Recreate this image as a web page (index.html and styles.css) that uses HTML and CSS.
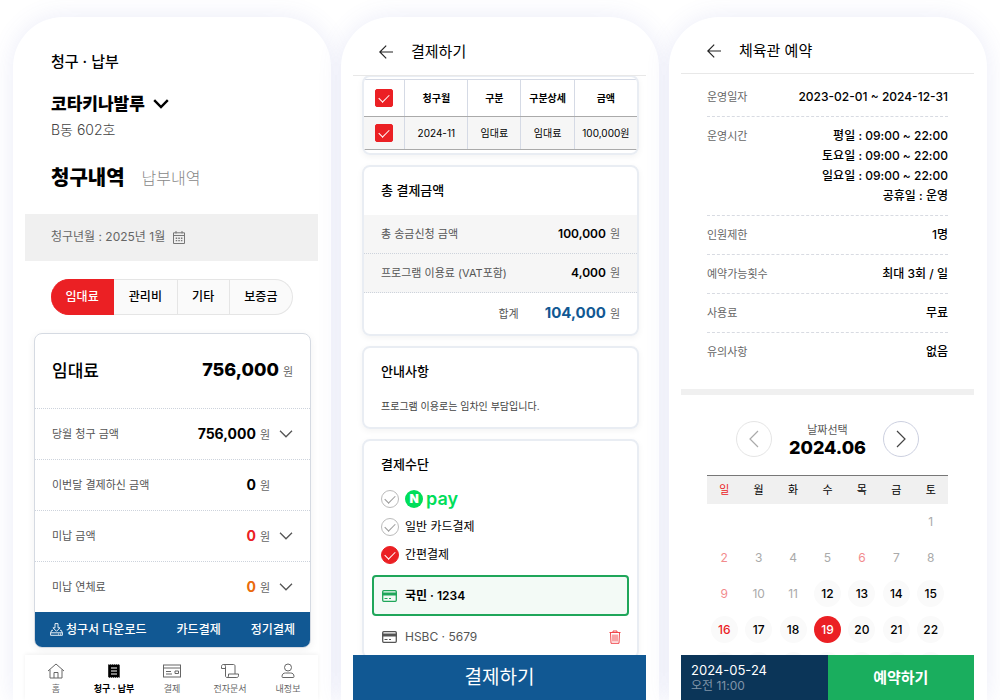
FILE: index.html
```html
<!DOCTYPE html>
<html lang="ko">
  <head>
    <meta charset="UTF-8" />
    <meta name="viewport" content="width=device-width, initial-scale=1.0" />
    <title>청구 · 납부</title>
    <link rel="stylesheet" href="styles.css" />
  </head>
  <body>
    <main class="phones">
      <!-- Billing -->
      <section class="phone">
        <div class="screen">
          <div class="bill-top">
            <h1 class="bill-title">청구 · 납부</h1>
            <label class="place">
              <select class="place-select" aria-label="건물 선택">
                <option>코타키나발루</option>
              </select>
              <svg class="place-arrow" width="16" height="10" viewBox="0 0 16 10" fill="none" stroke="#000" stroke-width="2.4"><path d="M1.2 1.2 8 8l6.8-6.8" /></svg>
            </label>
            <p class="room">B동 602호</p>
            <div class="bill-views">
              <button type="button" class="view active">청구내역</button>
              <button type="button" class="view">납부내역</button>
            </div>
          </div>

          <button type="button" class="month-bar">
            청구년월 : 2025년 1월
            <svg width="12" height="13" viewBox="0 0 12 13" fill="none" stroke="#777"><path d="M.5 1.800h11v10.700H.5zM.5 4.500h11M3 0v2.500M9 0v2.500" /><path d="M2.700 7.200h6.800M2.700 9.600h6.800" stroke-width="1.400" stroke-dasharray="1.500 1.100" /></svg>
          </button>

          <div class="tabs">
            <button type="button" class="tab active">임대료</button>
            <button type="button" class="tab">관리비</button>
            <button type="button" class="tab">기타</button>
            <button type="button" class="tab">보증금</button>
          </div>

          <article class="bill-card">
            <div class="bill-head">
              <h2>임대료</h2>
              <p><strong>756,000</strong><span class="won">원</span></p>
            </div>
            <div class="bill-row">
              <span>당월 청구 금액</span>
              <p><strong>756,000</strong><span class="won">원</span></p>
              <button type="button" class="toggle" aria-label="펼치기"><svg width="14" height="8" viewBox="0 0 14 8" fill="none" stroke="#555" stroke-width="1.3"><path d="m1 .8 6 6 6-6" /></svg></button>
            </div>
            <div class="bill-row">
              <span>이번달 결제하신 금액</span>
              <p><strong>0</strong><span class="won">원</span></p>
              <span class="toggle"></span>
            </div>
            <div class="bill-row">
              <span>미납 금액</span>
              <p><strong class="red">0</strong><span class="won">원</span></p>
              <button type="button" class="toggle" aria-label="펼치기"><svg width="14" height="8" viewBox="0 0 14 8" fill="none" stroke="#555" stroke-width="1.3"><path d="m1 .8 6 6 6-6" /></svg></button>
            </div>
            <div class="bill-row">
              <span>미납 연체료</span>
              <p><strong class="orange">0</strong><span class="won">원</span></p>
              <button type="button" class="toggle" aria-label="펼치기"><svg width="14" height="8" viewBox="0 0 14 8" fill="none" stroke="#555" stroke-width="1.3"><path d="m1 .8 6 6 6-6" /></svg></button>
            </div>
            <div class="bill-actions">
              <button type="button">
                <svg width="13" height="13" viewBox="0 0 13 13" fill="none" stroke="#fff" stroke-width=".9"><path d="M5 .6h3v4.200h2L6.500 8.300 3 4.800h2z" /><path d="M3 7.300H1.700L.6 9.800v2.500h11.800V9.800l-1.100-2.500H10" /><path d="M.6 9.800h11.800M8 11.100h1M10 11.100h1" /></svg>
                청구서 다운로드
              </button>
              <button type="button">카드결제</button>
              <button type="button">정기결제</button>
            </div>
          </article>
        </div>

        <nav class="bottom-nav">
          <a href="#home">
            <svg width="18" height="16" viewBox="0 0 18 16" fill="none" stroke="#666"><path d="M1 8 9 1l8 7" /><path d="M3 6.500V15h12V6.500" /><path d="M7 15V9.500h4V15" /></svg>
            홈
          </a>
          <a href="#bill" class="active">
            <svg width="18" height="16" viewBox="0 0 18 16"><path d="M3.200 1l1 .9 1-.9 1 .9 1-.9 1 .9 1-.9 1 .9 1-.9 1 .9 1-.9 1 .9.500-.4V15l-1-.9-1 .9-1-.9-1 .9-1-.9-1 .9-1-.9-1 .9-1-.9-1 .9-1-.9-.500.4z" /><path d="M6 5h6M6 8h6M6 11h6" stroke="#fff" stroke-width="1.200" /></svg>
            청구 · 납부
          </a>
          <a href="#pay">
            <svg width="18" height="16" viewBox="0 0 18 16" fill="none" stroke="#666"><rect x=".5" y="2" width="17" height="12" /><path d="M.5 5h17M3 8.500h5M3 11h6M12 8h3.500v2.500H12z" /></svg>
            결제
          </a>
          <a href="#docs">
            <svg width="18" height="16" viewBox="0 0 18 16" fill="none" stroke="#666"><path d="M2.500 1.500h10c1 0 1.500.7 1.500 1.500v8" /><path d="M4.500 5.500h-4V3.300c0-1 .7-1.800 2-1.800s2 .8 2 1.800V13c0 1 .8 1.500 1.500 1.500s1.500-.7 1.500-1.500v-2h10v1.800c0 1-.8 1.700-1.700 1.700H6" /></svg>
            전자문서
          </a>
          <a href="#me">
            <svg width="18" height="16" viewBox="0 0 18 16" fill="none" stroke="#666"><circle cx="9" cy="4.500" r="3.500" /><path d="M3 13.500c0-2.500 1.500-3.500 3.500-3.500h5c2 0 3.500 1 3.500 3.500 0 .8-.4 1-1 1H4c-.6 0-1-.2-1-1z" /></svg>
            내정보
          </a>
        </nav>
      </section>

      <!-- Payment -->
      <section class="phone">
        <header class="top-bar">
          <button type="button" aria-label="뒤로"><svg width="14" height="14" viewBox="0 0 14 14" fill="none" stroke="#222" stroke-width="1.200"><path d="M14 7H.8M7.200.6.800 7l6.400 6.400" /></svg></button>
          <h1>결제하기</h1>
        </header>
        <div class="screen">
          <article class="card list-card">
            <table class="pay-table">
              <thead>
                <tr>
                  <th class="col-check"><input type="checkbox" class="check" aria-label="전체 선택" checked /></th>
                  <th class="col-month">청구월</th>
                  <th>구분</th>
                  <th>구분상세</th>
                  <th class="col-price">금액</th>
                </tr>
              </thead>
              <tbody>
                <tr>
                  <td><input type="checkbox" class="check" aria-label="2024-11 임대료" checked /></td>
                  <td>2024-11</td>
                  <td>임대료</td>
                  <td>임대료</td>
                  <td>100,000원</td>
                </tr>
              </tbody>
            </table>
          </article>

          <article class="card">
            <h2>총 결제금액</h2>
            <div class="sum-row">
              <span>총 송금신청 금액</span>
              <p><strong>100,000</strong><span class="won">원</span></p>
            </div>
            <div class="sum-row">
              <span>프로그램 이용료 (VAT포함)</span>
              <p><strong>4,000</strong><span class="won">원</span></p>
            </div>
            <div class="sum-total">
              <span>합계</span>
              <p><strong>104,000</strong><span class="won">원</span></p>
            </div>
          </article>

          <article class="card">
            <h2>안내사항</h2>
            <p class="notice">프로그램 이용로는 임차인 부담입니다.</p>
          </article>

          <article class="card">
            <h2>결제수단</h2>
            <div class="methods">
              <label class="method">
                <input type="radio" name="method" class="check round" />
                <span class="npay"><b>N</b>pay</span>
              </label>
              <label class="method">
                <input type="radio" name="method" class="check round" />
                일반 카드결제
              </label>
              <label class="method">
                <input type="radio" name="method" class="check round" checked />
                간편결제
              </label>
            </div>
            <div class="my-card selected">
              <button type="button" class="card-name">
                <svg width="15" height="12" viewBox="0 0 15 12"><rect x=".7" y=".7" width="13.600" height="10.600" rx="1" fill="none" stroke="currentColor" stroke-width="1.300" /><path d="M0 2.500h15v3H0z" fill="currentColor" /><path d="M2.500 8.500h3M7 8.500h2" stroke="currentColor" stroke-width="1.200" /></svg>
                <span>국민 · 1234</span>
              </button>
            </div>
            <div class="my-card">
              <button type="button" class="card-name">
                <svg width="15" height="12" viewBox="0 0 15 12"><rect x=".7" y=".7" width="13.600" height="10.600" rx="1" fill="none" stroke="currentColor" stroke-width="1.300" /><path d="M0 2.500h15v3H0z" fill="currentColor" /><path d="M2.500 8.500h3M7 8.500h2" stroke="currentColor" stroke-width="1.200" /></svg>
                <span>HSBC · 5679</span>
              </button>
              <button type="button" class="trash" aria-label="삭제"><svg width="12" height="14" viewBox="0 0 12 14" fill="none" stroke="#f0474b"><path d="M.5 2.500h11M4 2.500v-1.500h4v1.500M1.500 2.500l.5 10.800h8l.5-10.800M4 4.500v7M6 4.500v7M8 4.500v7" /></svg></button>
            </div>
          </article>
        </div>
        <button type="button" class="pay-button">결제하기</button>
      </section>

      <!-- Reservation -->
      <section class="phone">
        <header class="top-bar book-bar">
          <button type="button" aria-label="뒤로"><svg width="14" height="14" viewBox="0 0 14 14" fill="none" stroke="#222" stroke-width="1.200"><path d="M14 7H.8M7.200.6.800 7l6.400 6.400" /></svg></button>
          <h1>체육관 예약</h1>
        </header>
        <div class="screen">
          <dl class="info">
            <div><dt>운영일자</dt><dd>2023-02-01 ~ 2024-12-31</dd></div>
            <div>
              <dt>운영시간</dt>
              <dd>평일 : 09:00 ~ 22:00<br />토요일 : 09:00 ~ 22:00<br />일요일 : 09:00 ~ 22:00<br />공휴일 : 운영</dd>
            </div>
            <div><dt>인원제한</dt><dd>1명</dd></div>
            <div><dt>예약가능횟수</dt><dd>최대 3회 / 일</dd></div>
            <div><dt>사용료</dt><dd>무료</dd></div>
            <div><dt>유의사항</dt><dd>없음</dd></div>
          </dl>

          <div class="month-nav">
            <button type="button" class="prev" aria-label="이전 달"><svg width="10" height="18" viewBox="0 0 10 18" fill="none" stroke="#aaa" stroke-width="1.200"><path d="M9 1 1 9l8 8" /></svg></button>
            <p>날짜선택<strong>2024.06</strong></p>
            <button type="button" aria-label="다음 달"><svg width="10" height="18" viewBox="0 0 10 18" fill="none" stroke="#444" stroke-width="1.200"><path d="m1 1 8 8-8 8" /></svg></button>
          </div>

          <table class="calendar">
            <thead>
              <tr><th class="red">일</th><th>월</th><th>화</th><th>수</th><th>목</th><th>금</th><th>토</th></tr>
            </thead>
            <tbody>
              <tr><td></td><td></td><td></td><td></td><td></td><td></td><td><button type="button" disabled>1</button></td></tr>
              <tr>
                <td><button type="button" class="red" disabled>2</button></td>
                <td><button type="button" disabled>3</button></td>
                <td><button type="button" disabled>4</button></td>
                <td><button type="button" disabled>5</button></td>
                <td><button type="button" class="red" disabled>6</button></td>
                <td><button type="button" disabled>7</button></td>
                <td><button type="button" disabled>8</button></td>
              </tr>
              <tr>
                <td><button type="button" class="red" disabled>9</button></td>
                <td><button type="button" disabled>10</button></td>
                <td><button type="button" disabled>11</button></td>
                <td><button type="button">12</button></td>
                <td><button type="button">13</button></td>
                <td><button type="button">14</button></td>
                <td><button type="button">15</button></td>
              </tr>
              <tr>
                <td><button type="button" class="red">16</button></td>
                <td><button type="button">17</button></td>
                <td><button type="button">18</button></td>
                <td><button type="button" class="picked">19</button></td>
                <td><button type="button">20</button></td>
                <td><button type="button">21</button></td>
                <td><button type="button">22</button></td>
              </tr>
              <tr>
                <td><button type="button" aria-label="23"></button></td>
                <td><button type="button" aria-label="24"></button></td>
                <td><button type="button" aria-label="25"></button></td>
                <td><button type="button" aria-label="26"></button></td>
                <td><button type="button" aria-label="27"></button></td>
                <td><button type="button" aria-label="28"></button></td>
                <td><button type="button" aria-label="29"></button></td>
              </tr>
            </tbody>
          </table>
        </div>
        <div class="book-footer">
          <p>2024-05-24<span>오전 11:00</span></p>
          <button type="button">예약하기</button>
        </div>
      </section>
    </main>
  </body>
</html>
```
FILE: styles.css
```css
* {
  margin: 0;
  padding: 0;
  box-sizing: border-box;
}

body {
  font-family: Inter, "Noto Sans CJK KR", sans-serif;
  font-size: 12px;
  line-height: 20px;
  color: #000;
  background: #fff;
}

button,
select,
input {
  font: inherit;
  color: inherit;
  background: none;
  border: none;
  cursor: pointer;
}

svg {
  display: block;
  flex: none;
}

.red {
  color: #eb2024;
}

.orange {
  color: #ea6a0c;
}

.phones {
  display: grid;
  grid-template-columns: repeat(3, minmax(0, 1fr));
  gap: 10px;
  height: 100vh;
  padding: 17px 13px 0;
  overflow: hidden;
}

.phone {
  display: flex;
  flex-direction: column;
  min-height: 0;
  padding: 0 13px 0 12px;
  background: #fff;
  border-radius: 50px 50px 0 0;
  box-shadow: 0 0 24px rgba(90, 100, 200, 0.12);
}

.screen {
  flex: 1;
  min-height: 0;
  overflow: hidden;
}

.won {
  margin-left: 4px;
  font-size: 11px;
  font-weight: 400;
  color: #666;
}

/* Billing */
.bill-top {
  padding: 35px 26px 20px;
}

.bill-title {
  font-size: 15px;
  font-weight: 500;
  line-height: 20px;
}

.place {
  display: flex;
  align-items: center;
  gap: 8px;
  margin-top: 20px;
}

.place-select {
  appearance: none;
  font-size: 17px;
  font-weight: 800;
  line-height: 24px;
}

.room {
  margin-top: 4px;
  font-size: 14px;
  font-weight: 300;
  color: #444;
}

.bill-views {
  display: flex;
  align-items: center;
  gap: 17px;
  margin-top: 22px;
}

.view {
  font-size: 16px;
  font-weight: 300;
  line-height: 32px;
  color: #888;
}

.view.active {
  font-size: 20px;
  font-weight: 800;
  color: #000;
}

.month-bar {
  display: flex;
  align-items: center;
  gap: 8px;
  width: 100%;
  padding: 13px 26px 14px;
  color: #666;
  background: #f0f0f0;
}

.tabs {
  display: flex;
  margin: 18px 25px 18px 26px;
}

.tab {
  flex: auto;
  height: 36px;
  font-weight: 500;
  background: #fafafa;
  border: 1px solid #e5e5e5;
  border-left: none;
}

.tab.active {
  color: #fff;
  background: #eb2024;
  border-color: #eb2024;
}

.tab:first-child {
  border-radius: 18px 0 0 18px;
}

.tab:last-child {
  border-radius: 0 18px 18px 0;
}

.bill-card {
  margin: 0 7px 0 9px;
  border: 1px solid #d5dae2;
  border-radius: 8px;
  box-shadow: 0 2px 8px rgba(0, 0, 0, 0.06);
  overflow: hidden;
}

.bill-head {
  display: flex;
  align-items: center;
  justify-content: space-between;
  height: 74px;
  padding: 0 17px;
}

.bill-head h2 {
  font-size: 17px;
  font-weight: 500;
}

.bill-head strong {
  font-size: 18px;
  font-weight: 800;
}

.bill-row {
  display: flex;
  align-items: center;
  height: 51px;
  padding: 0 17px;
  font-size: 11px;
  color: #555;
  border-top: 1px dotted #cdd3dc;
}

.bill-row p {
  margin-left: auto;
}

.bill-row strong {
  font-size: 14px;
  font-weight: 700;
}

.bill-row strong:not([class]) {
  color: #000;
}

.toggle {
  width: 14px;
  margin-left: 9px;
}

.bill-actions {
  display: flex;
  align-items: center;
  justify-content: space-between;
  height: 35px;
  padding: 0 15px;
  color: #fff;
  background: #115893;
}

.bill-actions button {
  display: flex;
  align-items: center;
  gap: 3px;
  font-weight: 500;
}

.bottom-nav {
  display: grid;
  grid-template-columns: repeat(5, 1fr);
  height: 45px;
  padding: 8px 1px 0 2px;
  background: #fff;
  box-shadow: 0 -1px 4px rgba(0, 0, 0, 0.06);
}

.bottom-nav a {
  display: flex;
  flex-direction: column;
  align-items: center;
  gap: 3px;
  font-size: 9px;
  line-height: 14px;
  color: #666;
  text-decoration: none;
}

.bottom-nav .active {
  font-weight: 700;
  color: #000;
}

/* Payment */
.top-bar {
  display: flex;
  align-items: center;
  gap: 18px;
  padding: 24px 26px 12px;
  border-bottom: 1px solid #e8e8e8;
}

.top-bar h1 {
  font-size: 15px;
  font-weight: 400;
  line-height: 22px;
}

.card {
  margin: 0 7px 10px 9px;
  border: 2px solid #e9edf3;
  border-radius: 8px;
  box-shadow: 0 2px 6px rgba(0, 0, 0, 0.05);
  overflow: hidden;
}

.card h2 {
  padding: 13px 17px 15px;
  font-size: 13px;
  font-weight: 500;
}

.list-card {
  margin-top: -1px;
  padding: 2px 0 3px;
}

.pay-table {
  width: 100%;
  font-size: 10px;
  text-align: center;
  table-layout: fixed;
  border-collapse: collapse;
}

.pay-table th,
.pay-table td {
  height: 33px;
  line-height: 18px;
  border-left: 1px solid #d5dae5;
  border-bottom: 1px solid #aaa;
  white-space: nowrap;
}

.pay-table th {
  height: 37px;
  font-weight: 700;
  border-top: 1px solid #d5dae5;
}

.pay-table td {
  background: #f6f6f6;
}

.pay-table th:first-child,
.pay-table td:first-child {
  border-left: none;
}

.col-check {
  width: 15%;
}

.col-month,
.col-price {
  width: 23%;
}

.check {
  display: inline-grid;
  place-content: center;
  flex: none;
  width: 18px;
  height: 18px;
  appearance: none;
  vertical-align: top;
  border: 1px solid #bbb;
  border-radius: 2px;
}

.check::after {
  content: "";
  width: 9px;
  height: 5px;
  margin-bottom: 3px;
  border-left: 1px solid #999;
  border-bottom: 1px solid #999;
  transform: rotate(-45deg);
}

.check:checked {
  background: #eb2024;
  border-color: #eb2024;
}

.check:checked::after {
  border-color: #fff;
}

.round {
  border-radius: 50%;
}

.sum-row,
.sum-total {
  display: flex;
  align-items: center;
  justify-content: space-between;
  height: 39px;
  padding: 0 17px;
  font-size: 11px;
  color: #555;
}

.sum-row {
  background: #f6f6f6;
  border-bottom: 1px dotted #cdd3dc;
}

.sum-row strong {
  font-size: 12px;
  font-weight: 600;
  color: #000;
}

.sum-total {
  gap: 26px;
  justify-content: flex-end;
  height: 41px;
}

.sum-total strong {
  font-size: 15px;
  font-weight: 700;
  color: #115893;
}

.notice {
  padding: 0 17px 11px;
  font-size: 10px;
  color: #444;
}

.methods {
  display: grid;
  gap: 8px;
  padding: 0 17px 10px;
}

.method {
  display: flex;
  align-items: center;
  gap: 6px;
}

.npay {
  display: flex;
  align-items: center;
  gap: 3px;
  font-size: 18px;
  font-weight: 600;
  color: #00de5a;
}

.npay b {
  width: 18px;
  height: 18px;
  font-size: 12px;
  font-weight: 900;
  line-height: 18px;
  text-align: center;
  color: #fff;
  background: #00de5a;
  border-radius: 50%;
}

.my-card {
  display: flex;
  align-items: center;
  justify-content: space-between;
  height: 41px;
  margin: 0 8px;
  padding: 0 8px 0 10px;
  color: #555;
}

.my-card.selected {
  padding: 0 8px;
  background: #f3faf6;
  border: 2px solid #1fa65a;
  border-radius: 4px;
}

.card-name {
  display: flex;
  align-items: center;
  gap: 8px;
}

.selected .card-name {
  font-weight: 600;
  color: #1fa65a;
}

.selected .card-name span {
  color: #000;
}

.pay-button {
  height: 45px;
  font-size: 19px;
  color: #fff;
  background: #115893;
}

/* Reservation */
.book-bar {
  padding: 23px 26px 11px;
}

.info {
  padding: 4px 26px 18px;
  border-bottom: 6px solid #f0f0f0;
}

.info div {
  display: flex;
  justify-content: space-between;
  padding: 9px 0;
  border-bottom: 1px dashed #d8dbe2;
}

.info div:last-child {
  border-bottom: none;
}

.info dt {
  font-size: 11px;
  color: #666;
}

.info dd {
  font-weight: 500;
  text-align: right;
}

.month-nav {
  display: flex;
  align-items: center;
  justify-content: center;
  gap: 17px;
  padding: 26px 0 18px;
}

.month-nav button {
  display: grid;
  place-content: center;
  width: 36px;
  height: 36px;
  border: 1px solid #ccd0e0;
  border-radius: 50%;
}

.month-nav .prev {
  border-color: #e5e5e5;
}

.month-nav p {
  font-size: 11px;
  line-height: 18px;
  text-align: center;
  color: #555;
}

.month-nav strong {
  display: block;
  font-size: 18px;
  font-weight: 800;
  color: #000;
}

.calendar {
  width: calc(100% - 52px);
  margin: 0 26px;
  table-layout: fixed;
  border-collapse: collapse;
  text-align: center;
}

.calendar th {
  height: 28px;
  font-size: 11px;
  font-weight: 400;
  background: #f0f0f0;
  border-top: 1px solid #777;
}

.calendar td {
  height: 36px;
}

.calendar button {
  width: 27px;
  height: 27px;
  font-weight: 500;
  vertical-align: middle;
  background: #fafafa;
  border-radius: 50%;
}

.calendar button:disabled {
  font-weight: 400;
  color: #aaa;
  background: none;
}

.calendar button.red:disabled {
  color: #f28b8d;
}

.calendar .picked {
  color: #fff;
  background: #eb2024;
}

.book-footer {
  display: grid;
  grid-template-columns: 1fr 1fr;
  height: 45px;
  color: #fff;
  background: #1aae5e;
}

.book-footer p {
  padding: 7px 10px;
  font-size: 13px;
  line-height: 16px;
  background: #0b3558;
}

.book-footer span {
  display: block;
  font-size: 12px;
  color: #8094a8;
}

.book-footer button {
  font-size: 15px;
  font-weight: 700;
}
```
